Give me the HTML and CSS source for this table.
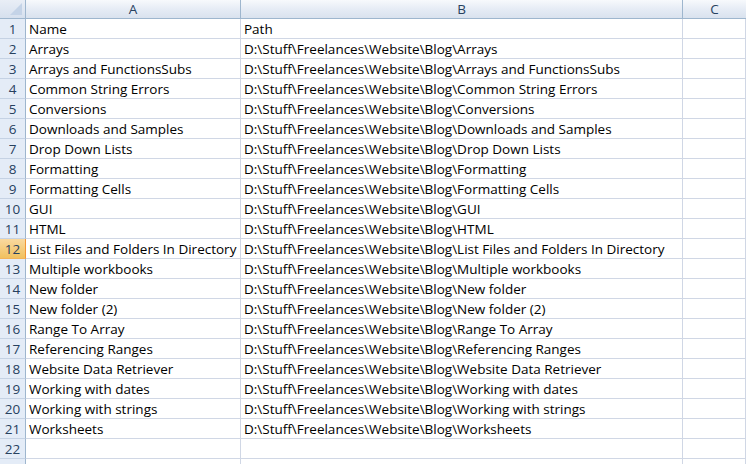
FILE: index.html
```html
<!DOCTYPE html>
<html>
<head>
<meta charset="utf-8">
<link rel="stylesheet" href="styles.css">
</head>
<body>
<div class="sheet">
  <div class="corner"><span class="tri"></span></div>
  <div class="colhdr">A</div>
  <div class="colhdr">B</div>
  <div class="colhdr last">C</div>

  <div class="rowhdr">1</div><div class="cell">Name</div><div class="cell">Path</div><div class="cell"></div>
  <div class="rowhdr">2</div><div class="cell">Arrays</div><div class="cell">D:\Stuff\Freelances\Website\Blog\Arrays</div><div class="cell"></div>
  <div class="rowhdr">3</div><div class="cell">Arrays and FunctionsSubs</div><div class="cell">D:\Stuff\Freelances\Website\Blog\Arrays and FunctionsSubs</div><div class="cell"></div>
  <div class="rowhdr">4</div><div class="cell">Common String Errors</div><div class="cell">D:\Stuff\Freelances\Website\Blog\Common String Errors</div><div class="cell"></div>
  <div class="rowhdr">5</div><div class="cell">Conversions</div><div class="cell">D:\Stuff\Freelances\Website\Blog\Conversions</div><div class="cell"></div>
  <div class="rowhdr">6</div><div class="cell">Downloads and Samples</div><div class="cell">D:\Stuff\Freelances\Website\Blog\Downloads and Samples</div><div class="cell"></div>
  <div class="rowhdr">7</div><div class="cell">Drop Down Lists</div><div class="cell">D:\Stuff\Freelances\Website\Blog\Drop Down Lists</div><div class="cell"></div>
  <div class="rowhdr">8</div><div class="cell">Formatting</div><div class="cell">D:\Stuff\Freelances\Website\Blog\Formatting</div><div class="cell"></div>
  <div class="rowhdr">9</div><div class="cell">Formatting Cells</div><div class="cell">D:\Stuff\Freelances\Website\Blog\Formatting Cells</div><div class="cell"></div>
  <div class="rowhdr">10</div><div class="cell">GUI</div><div class="cell">D:\Stuff\Freelances\Website\Blog\GUI</div><div class="cell"></div>
  <div class="rowhdr">11</div><div class="cell">HTML</div><div class="cell">D:\Stuff\Freelances\Website\Blog\HTML</div><div class="cell"></div>
  <div class="rowhdr sel">12</div><div class="cell">List Files and Folders In Directory</div><div class="cell">D:\Stuff\Freelances\Website\Blog\List Files and Folders In Directory</div><div class="cell"></div>
  <div class="rowhdr">13</div><div class="cell">Multiple workbooks</div><div class="cell">D:\Stuff\Freelances\Website\Blog\Multiple workbooks</div><div class="cell"></div>
  <div class="rowhdr">14</div><div class="cell">New folder</div><div class="cell">D:\Stuff\Freelances\Website\Blog\New folder</div><div class="cell"></div>
  <div class="rowhdr">15</div><div class="cell">New folder (2)</div><div class="cell">D:\Stuff\Freelances\Website\Blog\New folder (2)</div><div class="cell"></div>
  <div class="rowhdr">16</div><div class="cell">Range To Array</div><div class="cell">D:\Stuff\Freelances\Website\Blog\Range To Array</div><div class="cell"></div>
  <div class="rowhdr">17</div><div class="cell">Referencing Ranges</div><div class="cell">D:\Stuff\Freelances\Website\Blog\Referencing Ranges</div><div class="cell"></div>
  <div class="rowhdr">18</div><div class="cell">Website Data Retriever</div><div class="cell">D:\Stuff\Freelances\Website\Blog\Website Data Retriever</div><div class="cell"></div>
  <div class="rowhdr">19</div><div class="cell">Working with dates</div><div class="cell">D:\Stuff\Freelances\Website\Blog\Working with dates</div><div class="cell"></div>
  <div class="rowhdr">20</div><div class="cell">Working with strings</div><div class="cell">D:\Stuff\Freelances\Website\Blog\Working with strings</div><div class="cell"></div>
  <div class="rowhdr">21</div><div class="cell">Worksheets</div><div class="cell">D:\Stuff\Freelances\Website\Blog\Worksheets</div><div class="cell"></div>
  <div class="rowhdr">22</div><div class="cell"></div><div class="cell"></div><div class="cell"></div>
  <div class="rowhdr"></div><div class="cell"></div><div class="cell"></div><div class="cell"></div>
</div>
</body>
</html>
```
FILE: styles.css
```css
html, body {
  margin: 0;
  padding: 0;
  background: #ffffff;
  overflow: hidden;
}
.sheet {
  display: grid;
  grid-template-columns: 26px 215px 442px 63px;
  grid-template-rows: 19px repeat(23, 20px);
  font-family: "Open Sans", "Noto Sans", sans-serif;
  font-size: 13.5px;
  color: #000000;
}
.corner {
  position: relative;
  background: linear-gradient(#e9eef6, #d6e0ee);
  border-right: 1px solid #9eb6ce;
  border-bottom: 1px solid #9eb6ce;
  box-sizing: border-box;
}
.tri {
  position: absolute;
  right: 3px;
  bottom: 3px;
  width: 0;
  height: 0;
  border-left: 12px solid transparent;
  border-bottom: 12px solid #c4d3e7;
}
.colhdr {
  box-sizing: border-box;
  background: linear-gradient(#f7f9fc 0%, #e6ecf5 50%, #d9e2ee 100%);
  border-right: 1px solid #9eb6ce;
  border-bottom: 1px solid #9eb6ce;
  color: #27415f;
  font-size: 13.5px;
  text-align: center;
  line-height: 18px;
}
.colhdr.last {
  border-right: none;
}
.rowhdr {
  box-sizing: border-box;
  background: #e4ecf7;
  border-right: 1px solid #9eb6ce;
  border-bottom: 1px solid #c5d2e4;
  color: #27415f;
  text-align: center;
  line-height: 20px;
  font-size: 13.5px;
}
.rowhdr.sel {
  background: linear-gradient(#f9d99f, #f1c15f);
  border-right: 1px solid #f29536;
  border-bottom: 1px solid #f2b35a;
  color: #27415f;
}
.cell {
  box-sizing: border-box;
  border-right: 1px solid #d0d7e5;
  border-bottom: 1px solid #d0d7e5;
  padding-left: 3px;
  line-height: 20px;
  white-space: nowrap;
  overflow: hidden;
}
```
